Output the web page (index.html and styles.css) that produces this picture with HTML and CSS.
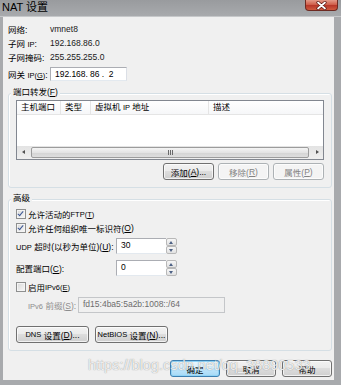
FILE: index.html
```html
<!DOCTYPE html>
<html lang="zh-CN">
<head>
    <meta charset="UTF-8">
    <meta name="viewport" content="width=device-width, initial-scale=1.0">
    <title>NAT 设置</title>
    <link rel="stylesheet" href="styles.css">
</head>
<body>
<div class="window">
    <div class="titlebar">
        <span class="title">NAT 设置</span>
        <span class="close">
            <svg width="11" height="9" viewBox="0 0 11 9">
                <path d="M2 1.5 L9 7.5 M9 1.5 L2 7.5" stroke="#5a1a14" stroke-width="3.2" stroke-linecap="round"/>
                <path d="M2 1.5 L9 7.5 M9 1.5 L2 7.5" stroke="#fff" stroke-width="1.7" stroke-linecap="round"/>
            </svg>
        </span>
    </div>

    <div class="client">
        <div class="row"><span class="lbl">网络:</span><span class="val">vmnet8</span></div>
        <div class="row"><span class="lbl">子网 <span class="sm">IP</span>:</span><span class="val">192.168.86.0</span></div>
        <div class="row"><span class="lbl">子网掩码:</span><span class="val">255.255.255.0</span></div>
        <div class="row gw">
            <span class="lbl">网关 <span class="sm">IP(<u>G</u>)</span>:</span>
            <div class="ipbox"><span>192</span>.<span>168</span>.<span>86</span>.<span>2</span></div>
        </div>

        <!-- port forwarding -->
        <div class="group">
            <div class="gtitle">端口转发(<u>F</u>)</div>
            <div class="list">
                <div class="lhead">
                    <span class="c1">主机端口</span>
                    <span class="c2">类型</span>
                    <span class="c3">虚拟机 <span class="sm">IP</span> 地址</span>
                    <span class="c4">描述</span>
                </div>
                <div class="lbody"></div>
                <div class="hscroll">
                    <span class="arr left"></span>
                    <span class="thumb"><i class="grip"></i></span>
                    <span class="arr right"></span>
                </div>
            </div>
            <div class="btnrow">
                <div class="btn">添加(<u>A</u>)...</div>
                <div class="btn dis">移除(<u>R</u>)</div>
                <div class="btn dis">属性(<u>P</u>)</div>
            </div>
        </div>

        <!-- advanced -->
        <div class="group adv">
            <div class="gtitle">高级</div>
            <div class="crow"><span class="box on"></span>允许活动的 <span class="sm">FTP(<u>T</u>)</span></div>
            <div class="crow"><span class="box on"></span>允许任何组织唯一标识符(<u>O</u>)</div>
            <div class="frow">
                <span class="flbl"><span class="sm">UDP</span> 超时(以秒为单位)(<u>U</u>):</span>
                <div class="num">30</div>
                <div class="spin"><i class="up"></i><i class="down"></i></div>
            </div>
            <div class="frow port">
                <span class="flbl">配置端口(<u>C</u>):</span>
                <div class="num">0</div>
                <div class="spin"><i class="up"></i><i class="down"></i></div>
            </div>
            <div class="crow v6"><span class="box"></span>启用 <span class="sm">IPv6(<u>E</u>)</span></div>
            <div class="frow prefix">
                <span class="plbl"><span class="sm">IPv6</span> 前缀(<u>S</u>):</span>
                <div class="pbox">fd15:4ba5:5a2b:1008::/64</div>
            </div>
            <div class="btnrow left">
                <div class="btn wide"><span class="sm">DNS</span>&nbsp;设置(<u>D</u>)...</div>
                <div class="btn wide"><span class="sm">NetBIOS</span>&nbsp;设置(<u>N</u>)...</div>
            </div>
        </div>

        <div class="footer">
            <div class="btn def">确定</div>
            <div class="btn">取消</div>
            <div class="btn">帮助</div>
        </div>
    </div>

    <div class="wm">https://blog.csdn.net/qq_38890533</div>
</div>
</body>
</html>
```

FILE: styles.css
```css
body{
    margin: 0;
    background: #ffffff;
    font-family: "Liberation Sans", "Noto Sans CJK SC", sans-serif;
    font-size: 8.5px;
    color: #000;
}
u{
    text-decoration: underline;
    text-underline-offset: 1px;
}
.sm{
    font-size: 7.5px;
}
.window{
    position: relative;
    width: 341px;
    height: 385px;
    background: #a8aaad;
    display: flex;
    flex-direction: column;
    overflow: hidden;
}
.titlebar{
    height: 17px;
    flex: none;
    display: flex;
    align-items: flex-start;
    background: linear-gradient(#999b9e, #a9abae);
    box-shadow: inset 0 -1px #c6c8ca;
}
.title{
    margin-left: 2px;
    font-size: 11px;
    line-height: 15px;
}
.close{
    margin-left: auto;
    margin-right: 3px;
    width: 33px;
    height: 11px;
    box-sizing: border-box;
    border: 1px solid #6d2a22;
    border-top: none;
    border-radius: 0 0 4px 4px;
    background: linear-gradient(#e49a88, #d0604c 45%, #b8382a 55%, #cf5a3e);
    display: flex;
    align-items: center;
    justify-content: center;
}
.client{
    margin: 0 7px 5px 3px;
    height: 363px;
    box-sizing: border-box;
    padding: 5px 2px 0 5px;
    background: #f0f0f0;
}
.row{
    display: flex;
    align-items: center;
    height: 14px;
}
.lbl{
    width: 42px;
    flex: none;
    white-space: nowrap;
}
.val{
    font-size: 8.5px;
    color: #1a1a1a;
}
.gw{
    margin-top: 3px;
}
.ipbox{
    width: 77px;
    height: 14px;
    box-sizing: border-box;
    border: 1px solid #abadb3;
    border-bottom-color: #e3e9ef;
    border-right-color: #dbdfe6;
    background: #fff;
    display: flex;
    align-items: center;
    font-size: 8.5px;
    padding-left: 4px;
}
.ipbox span{
    width: 14px;
    text-align: center;
}
.ipbox span:first-child{
    text-align: left;
}

/* group boxes */
.group{
    margin-top: 12px;
    border: 1px solid #d5dfe5;
    border-radius: 3px;
    padding: 0 7px 7px 7px;
    box-shadow: inset 1px 1px #ffffff;
}
.gtitle{
    display: table;
    margin: -8px 0 2px -5px;
    padding: 0 2px;
    line-height: 12px;
    background: #f0f0f0;
}
.list{
    height: 60px;
    box-sizing: border-box;
    border: 1px solid #828790;
    background: #fff;
    display: flex;
    flex-direction: column;
}
.lhead{
    display: flex;
    height: 14px;
    box-sizing: border-box;
    border-bottom: 1px solid #e5e5e5;
    background: linear-gradient(#ffffff, #f6f7f9);
}
.lhead span{
    box-sizing: border-box;
    padding-left: 4px;
    line-height: 13px;
    border-right: 1px solid #e5e5e5;
    white-space: nowrap;
}
.lhead span.sm{
    padding: 0;
    border: none;
}
.lhead .c1{ width: 44px; }
.lhead .c2{ width: 30px; }
.lhead .c3{ width: 118px; }
.lhead .c4{ flex: 1; border-right: none; }
.lbody{
    flex: 1;
}
.hscroll{
    height: 13px;
    display: flex;
    align-items: stretch;
    background: linear-gradient(#e3e3e3, #efefef);
}
.arr{
    width: 12px;
    position: relative;
}
.arr::after{
    content: "";
    position: absolute;
    top: 4px;
    left: 5px;
    border-top: 2.5px solid transparent;
    border-bottom: 2.5px solid transparent;
}
.arr.left::after{
    border-right: 3px solid #505050;
}
.arr.right::after{
    border-left: 3px solid #505050;
}
.thumb{
    flex: 1;
    margin: 1px 2px;
    border: 1px solid #9c9c9c;
    border-radius: 2px;
    background: linear-gradient(#f4f4f4, #e4e4e4 50%, #d4d4d4 51%, #dedede);
    display: flex;
    align-items: center;
    justify-content: center;
}
.grip{
    width: 5px;
    height: 5px;
    background: repeating-linear-gradient(90deg, #6a6a6a 0 1px, transparent 1px 2px);
}
.btnrow{
    display: flex;
    justify-content: flex-end;
    gap: 4px;
    margin-top: 3px;
}
.btnrow .btn{
    width: 51px;
}
.btn{
    height: 17px;
    box-sizing: border-box;
    border: 1px solid #707070;
    border-radius: 3px;
    background: linear-gradient(#f2f2f2, #ebebeb 45%, #dddddd 50%, #cfcfcf);
    box-shadow: inset 0 0 0 1px rgba(255,255,255,0.7);
    display: flex;
    align-items: center;
    justify-content: center;
    white-space: nowrap;
}
.btn.dis{
    border-color: #adb2b5;
    background: #f4f4f4;
    color: #838383;
}
.btn.def{
    border-color: #3c7fb1;
    background: linear-gradient(#eaf6fd, #d9f0fc 45%, #bee6fd 50%, #a7d9f5);
    box-shadow: inset 0 0 0 1px #8fd3f6;
}

/* advanced */
.adv{
    margin-top: 11px;
}
.adv .gtitle{
    margin-bottom: 3px;
}
.crow{
    display: flex;
    align-items: center;
    height: 14px;
    white-space: nowrap;
}
.box{
    width: 10px;
    height: 10px;
    flex: none;
    box-sizing: border-box;
    border: 1px solid #8e8f8f;
    background: linear-gradient(135deg, #d8d8d8, #f8f8f8);
    box-shadow: inset 0 0 0 1px #f4f4f4;
    margin-right: 2px;
    position: relative;
}
.box.on::after{
    content: "";
    position: absolute;
    left: 2px;
    top: 0px;
    width: 2px;
    height: 5px;
    border-right: 1.5px solid #3b5694;
    border-bottom: 1.5px solid #3b5694;
    transform: rotate(40deg);
}
.frow{
    display: flex;
    align-items: center;
    height: 16px;
    margin-top: 3px;
}
.frow.port{
    margin-top: 6px;
}
.flbl{
    width: 100px;
    flex: none;
    white-space: nowrap;
}
.num{
    width: 50px;
    height: 16px;
    flex: none;
    box-sizing: border-box;
    border: 1px solid #abadb3;
    border-bottom-color: #e3e9ef;
    border-right: none;
    background: #fff;
    font-size: 8.5px;
    padding: 1px 0 0 4px;
}
.spin{
    width: 11px;
    height: 16px;
    display: flex;
    flex-direction: column;
}
.spin i{
    flex: 1;
    border: 1px solid #b8b8b8;
    border-radius: 2px;
    background: linear-gradient(#f7f7f7, #e2e2e2);
    position: relative;
}
.spin i::after{
    content: "";
    position: absolute;
    left: 2px;
    top: 2px;
    border-left: 2.5px solid transparent;
    border-right: 2.5px solid transparent;
}
.spin .up::after{
    border-bottom: 3px solid #4d6185;
}
.spin .down::after{
    border-top: 3px solid #4d6185;
}
.crow.v6{
    margin-top: 4px;
}
.prefix{
    padding-left: 12px;
}
.plbl{
    width: 50px;
    flex: none;
    white-space: nowrap;
    color: #8d8d8d;
}
.pbox{
    width: 147px;
    height: 16px;
    box-sizing: border-box;
    border: 1px solid #c4c6c9;
    background: #f0f0f0;
    color: #6d6d6d;
    font-size: 8.5px;
    padding: 1px 0 0 4px;
}
.btnrow.left{
    justify-content: flex-start;
    gap: 6px;
    margin-top: 13px;
}
.btnrow .btn.wide{
    width: 73px;
}
.footer{
    display: flex;
    justify-content: flex-end;
    gap: 6px;
    margin-top: 9px;
}
.footer .btn{
    width: 50px;
}
.wm{
    position: absolute;
    left: 88px;
    top: 355px;
    font-size: 14.5px;
    line-height: 20px;
    color: rgba(255,255,255,0.85);
    text-shadow: 0 0 1px rgba(100,100,100,0.8);
    white-space: nowrap;
}
```
